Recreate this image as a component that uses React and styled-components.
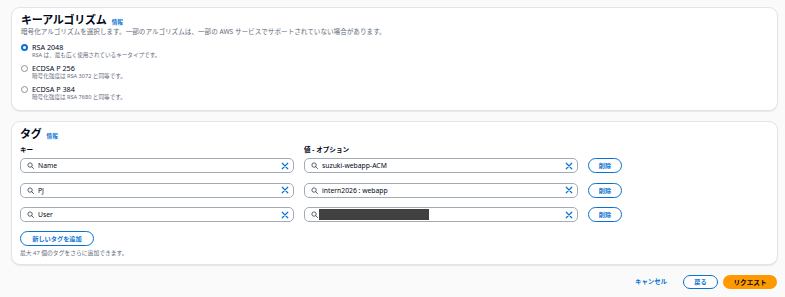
import React from "react";
import styled, { createGlobalStyle } from "styled-components";

const Global = createGlobalStyle`
  html, body { margin: 0; padding: 0; background: #fafafa; }
  body { font-family: "Noto Sans", "Noto Sans CJK JP", sans-serif; color: #000716; }
  * { box-sizing: border-box; }
`;

const Page = styled.div`
  padding: 7px 7px 0 11px;
  display: flex;
  flex-direction: column;
  gap: 10px;
  width: 785px;
`;

const Card = styled.section`
  background: #fff;
  border: 1px solid #e2e4e6;
  border-radius: 9px;
  box-shadow: 0 1px 1px rgba(0, 7, 22, 0.08);
  padding: ${(p) => p.$pad};
  display: flex;
  flex-direction: column;
`;

const TitleRow = styled.div`
  display: flex;
  align-items: baseline;
  gap: 5px;
  height: ${(p) => p.$h || 14}px;
  line-height: ${(p) => p.$h || 14}px;
`;

const Title = styled.h2`
  margin: 0;
  font-size: 11px;
  font-weight: 700;
  letter-spacing: -0.2px;
  color: #000716;
`;

const Info = styled.a`
  font-size: 5.6px;
  font-weight: 700;
  color: #0972d3;
`;

const Desc = styled.p`
  margin: 0;
  font-size: 6.6px;
  line-height: 10px;
  color: #5f6b7a;
`;

const Options = styled.div`
  display: flex;
  flex-direction: column;
  gap: 5px;
  margin-top: 6px;
`;

const Option = styled.label`
  display: grid;
  grid-template-columns: 7px 1fr;
  column-gap: 4px;
  align-items: center;
`;

const Radio = styled.span`
  width: 7px;
  height: 7px;
  border-radius: 50%;
  border: ${(p) => (p.$on ? "2px solid #0972d3" : "1px solid #8c949e")};
  background: #fff;
`;

const OptLabel = styled.span`
  font-size: 7.2px;
  line-height: 8px;
  color: #000716;
`;

const OptSub = styled.span`
  grid-column: 2;
  font-size: 5.6px;
  line-height: 8px;
  color: #5f6b7a;
`;

const FieldLabel = styled.div`
  font-size: 6.6px;
  font-weight: 700;
  line-height: 9px;
  color: #000716;
`;

const Grid = styled.div`
  display: grid;
  grid-template-columns: 274px 274px 34px;
  column-gap: 10px;
  row-gap: 9.5px;
  align-items: center;
`;

const Labels = styled(Grid)`
  margin-top: 5px;
  margin-bottom: 4px;
`;

const InputBox = styled.div`
  height: 15px;
  border: 1px solid #a4abb4;
  border-radius: 5px;
  display: flex;
  align-items: center;
  padding: 0 4px 0 6px;
  gap: 4px;
  background: #fff;
`;

const InputText = styled.span`
  flex: 1;
  font-size: 6.8px;
  color: #000716;
  white-space: nowrap;
`;

const Redact = styled.span`
  display: inline-block;
  width: 110px;
  height: 11.5px;
  background: #414141;
  margin-left: -3px;
  vertical-align: middle;
`;

const ClearBtn = styled.span`
  display: flex;
  width: 8px;
  height: 8px;
`;

const PillBtn = styled.button`
  height: ${(p) => p.$h || 15}px;
  width: ${(p) => p.$w}px;
  border: 1.3px solid #0972d3;
  border-radius: 10px;
  background: #fff;
  color: #0972d3;
  font-family: inherit;
  font-size: 6.2px;
  font-weight: 700;
  padding: 0;
  display: flex;
  align-items: center;
  justify-content: center;
`;

const AddWrap = styled.div`
  margin-top: 9px;
`;

const Hint = styled.div`
  margin-top: 3px;
  font-size: 5.8px;
  line-height: 8px;
  color: #5f6b7a;
`;

const Footer = styled.div`
  display: flex;
  justify-content: flex-end;
  align-items: center;
  padding-right: 1px;
`;

const LinkBtn = styled.span`
  font-size: 6.4px;
  font-weight: 700;
  color: #0972d3;
  margin-right: 16px;
`;

const PrimaryBtn = styled.button`
  height: 14.5px;
  width: 54px;
  margin-left: 5px;
  border: none;
  border-radius: 10px;
  background: #ff9900;
  color: #000716;
  font-family: inherit;
  font-size: 6.6px;
  font-weight: 700;
  padding: 0;
`;

const SearchIcon = () => (
  <svg width="7" height="7" viewBox="0 0 16 16" fill="none" stroke="#414d5c" strokeWidth="2">
    <circle cx="7" cy="7" r="5" />
    <path d="M10.6 10.6 L15 15" strokeLinecap="round" />
  </svg>
);

const XIcon = () => (
  <svg width="8" height="8" viewBox="0 0 16 16" fill="none" stroke="#0972d3" strokeWidth="2.4" strokeLinecap="round">
    <path d="M2.5 2.5 L13.5 13.5 M13.5 2.5 L2.5 13.5" />
  </svg>
);

const Field = ({ children }) => (
  <InputBox>
    <SearchIcon />
    <InputText>{children}</InputText>
    <ClearBtn>
      <XIcon />
    </ClearBtn>
  </InputBox>
);

const options = [
  { label: "RSA 2048", sub: "RSA は、最も広く使用されているキータイプです。", on: true },
  { label: "ECDSA P 256", sub: "暗号化強度は RSA 3072 と同等です。" },
  { label: "ECDSA P 384", sub: "暗号化強度は RSA 7680 と同等です。" },
];

const tags = [
  { k: "Name", v: "suzuki-webapp-ACM" },
  { k: "PJ", v: "intern2026 : webapp" },
  { k: "User", v: null },
];

export default function App() {
  return (
    <>
      <Global />
      <Page>
        <Card $pad="5px 9px 9px 9px">
          <TitleRow>
            <Title>キーアルゴリズム</Title>
            <Info>情報</Info>
          </TitleRow>
          <Desc>
            暗号化アルゴリズムを選択します。一部のアルゴリズムは、一部の AWS サービスでサポートされていない場合があります。
          </Desc>
          <Options>
            {options.map((o) => (
              <Option key={o.label}>
                <Radio $on={o.on} />
                <OptLabel>{o.label}</OptLabel>
                <OptSub>{o.sub}</OptSub>
              </Option>
            ))}
          </Options>
        </Card>

        <Card $pad="5px 9px 7px 8px">
          <TitleRow $h={13}>
            <Title>タグ</Title>
            <Info>情報</Info>
          </TitleRow>
          <Labels>
            <FieldLabel>キー</FieldLabel>
            <FieldLabel>値 - オプション</FieldLabel>
            <span />
          </Labels>
          <Grid>
            {tags.map((t) => (
              <React.Fragment key={t.k}>
                <Field>{t.k}</Field>
                <Field>{t.v === null ? <Redact /> : t.v}</Field>
                <PillBtn $w={34}>削除</PillBtn>
              </React.Fragment>
            ))}
          </Grid>
          <AddWrap>
            <PillBtn $w={74} $h={14.5}>新しいタグを追加</PillBtn>
          </AddWrap>
          <Hint>最大 47 個のタグをさらに追加できます。</Hint>
        </Card>

        <Footer>
          <LinkBtn>キャンセル</LinkBtn>
          <PillBtn $w={35} $h={14.5}>戻る</PillBtn>
          <PrimaryBtn>リクエスト</PrimaryBtn>
        </Footer>
      </Page>
    </>
  );
}
